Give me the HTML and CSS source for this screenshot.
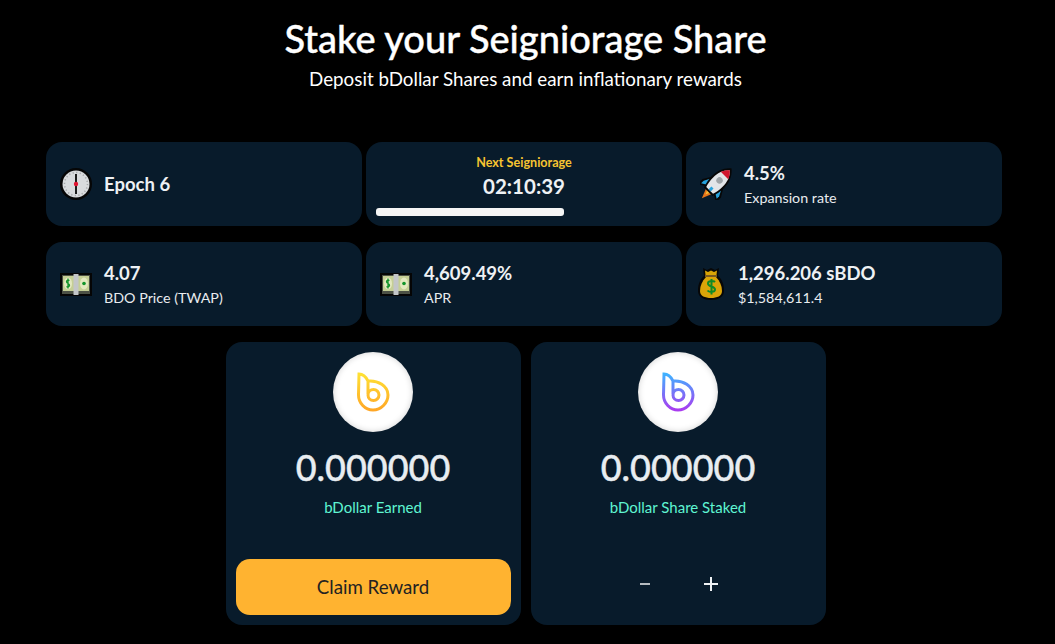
FILE: index.html
```html
<!DOCTYPE html>
<html lang="en">
<head>
    <meta charset="UTF-8">
    <title>Stake</title>
    <link rel="stylesheet" href="styles.css">
</head>
<body>
    <svg class="defs" width="0" height="0">
        <defs>
            <symbol id="ico_clock" viewBox="0 0 32 32">
                <circle cx="16" cy="16" r="16" fill="#060606"/>
                <circle cx="16" cy="16" r="13.500" fill="#d9dbdd"/>
                <circle cx="16" cy="16" r="11.500" fill="none" stroke="#a5a7a9" stroke-width="1.500" stroke-dasharray="1.200 2.400"/>
                <rect x="15" y="6" width="2" height="20" fill="#1d1d1d"/>
                <circle cx="16" cy="16" r="2.200" fill="#e0122f"/>
            </symbol>
            <symbol id="ico_money" viewBox="0 0 32 23">
                <rect width="32" height="23" fill="#050505"/>
                <rect x="2" y="2" width="28" height="19" fill="#4c5145"/>
                <rect x="3" y="3" width="26" height="15" fill="#c5cf95"/>
                <ellipse cx="8" cy="10.500" rx="4" ry="6" fill="#e3e8bf"/>
                <ellipse cx="24" cy="10.500" rx="4" ry="6" fill="#e3e8bf"/>
                <path d="M9.500 7.500 C8 6.500 6.500 7.500 6.500 8.800 C6.500 10.800 9.500 10.200 9.500 12.200 C9.500 13.500 8 14.500 6.500 13.500 M8 5.500 L8 15.500" fill="none" stroke="#12942a" stroke-width="1.300"/>
                <circle cx="24" cy="10.500" r="1.800" fill="#12942a"/>
                <rect x="13.500" y="1" width="5" height="21" fill="#c3c6c8"/>
            </symbol>
            <symbol id="ico_rocket" viewBox="0 0 32 32">
                <g transform="rotate(45 16 16)">
                    <path d="M12 26 L20 26 L16 36 Z" fill="#e8751a"/>
                    <path d="M14 26 L18 26 L16 31 Z" fill="#f5c23a"/>
                    <path d="M9 12 L3 22 L3 29 L10 25 L22 25 L29 29 L29 22 L23 12 Z" fill="#070707"/>
                    <path d="M9 15 L5 22.500 L5 26 L10 23 Z" fill="#27a2dc"/>
                    <path d="M23 15 L27 22.500 L27 26 L22 23 Z" fill="#27a2dc"/>
                    <path d="M16 -6 C22 -1 24.500 6 24.500 13 C24.500 18 23.500 23 22 27 L10 27 C8.500 23 7.500 18 7.500 13 C7.500 6 10 -1 16 -6 Z" fill="#070707"/>
                    <path d="M16 -3.500 C21 1 22.700 7 22.700 13 C22.700 18 22 22 20.800 25 L11.200 25 C10 22 9.300 18 9.300 13 C9.300 7 11 1 16 -3.500 Z" fill="#e2e5e8"/>
                    <path d="M16 -3.500 C18.500 -1.300 20.300 1.300 21.300 4 L10.700 4 C11.700 1.300 13.500 -1.300 16 -3.500 Z" fill="#d1152d"/>
                    <rect x="14.500" y="21" width="3" height="4" fill="#27a2dc"/>
                    <circle cx="16" cy="11" r="3.200" fill="#9ea4a8"/>
                </g>
            </symbol>
            <symbol id="ico_bag" viewBox="0 0 26 32">
                <path d="M5 0 L9 2 L13 0 L17 2 L21 0 L20 8 C25 12 26 18 26 23 C26 29 20 32 13 32 C6 32 0 29 0 23 C0 18 1 12 6 8 Z" fill="#070707"/>
                <path d="M7 2.500 L10 4 L13 2.500 L16 4 L19 2.500 L18.500 7 L7.500 7 Z" fill="#d9a406"/>
                <rect x="7" y="7" width="12" height="2" fill="#7a5a20"/>
                <path d="M8 9 L18 9 C22 13 24 18 24 23 C24 28 19 30 13 30 C7 30 2 28 2 23 C2 18 4 13 8 9 Z" fill="#dba508"/>
                <path d="M17 14 C15.500 12.500 10 12.500 10 15.500 C10 19 17 18 17 21.500 C17 24.500 11 24.500 9.500 22.500 M13.500 11 L13.500 26.500" fill="none" stroke="#0f8a26" stroke-width="2"/>
            </symbol>
            <linearGradient id="grad_gold" x1="0" y1="0" x2="0" y2="1">
                <stop offset="0" stop-color="#ffe135"/>
                <stop offset="1" stop-color="#ffa726"/>
            </linearGradient>
            <linearGradient id="grad_purple" x1="0" y1="0" x2="0" y2="1">
                <stop offset="0" stop-color="#3fb2ff"/>
                <stop offset="1" stop-color="#a93cf0"/>
            </linearGradient>
        </defs>
    </svg>

    <header class="page_head">
        <h1>Stake your Seigniorage Share</h1>
        <p>Deposit bDollar Shares and earn inflationary rewards</p>
    </header>

    <div class="stats">
        <div class="stat">
            <svg class="ico ico_round"><use href="#ico_clock"/></svg>
            <div class="stat_big">Epoch 6</div>
        </div>
        <div class="stat stat_next">
            <div class="next_label">Next Seigniorage</div>
            <div class="next_time">02:10:39</div>
            <div class="next_bar"></div>
        </div>
        <div class="stat">
            <svg class="ico ico_round"><use href="#ico_rocket"/></svg>
            <div class="stat_text">
                <div class="stat_big">4.5%</div>
                <div class="stat_small">Expansion rate</div>
            </div>
        </div>
        <div class="stat">
            <svg class="ico ico_money"><use href="#ico_money"/></svg>
            <div class="stat_text">
                <div class="stat_big">4.07</div>
                <div class="stat_small">BDO Price (TWAP)</div>
            </div>
        </div>
        <div class="stat">
            <svg class="ico ico_money"><use href="#ico_money"/></svg>
            <div class="stat_text">
                <div class="stat_big">4,609.49%</div>
                <div class="stat_small">APR</div>
            </div>
        </div>
        <div class="stat">
            <svg class="ico ico_bag"><use href="#ico_bag"/></svg>
            <div class="stat_text">
                <div class="stat_big">1,296.206 sBDO</div>
                <div class="stat_small">$1,584,611.4</div>
            </div>
        </div>
    </div>

    <div class="cards">
        <div class="card">
            <div class="logo">
                <svg width="34" height="40" viewBox="0 0 34 40"><path d="M3 2 C8 2 10 5 12 9 C22 8 32 14 32 23 C32 31 25 38 17 38 C9 38 2.500 31 2.500 23 Z M12 9 L12 22 M12 23 A5.500 5.500 0 1 0 23 23 A5.500 5.500 0 1 0 12 23" fill="none" stroke="url(#grad_gold)" stroke-width="3"/></svg>
            </div>
            <div class="amount">0.000000</div>
            <div class="amount_label">bDollar Earned</div>
            <button class="btn_claim">Claim Reward</button>
        </div>
        <div class="card">
            <div class="logo">
                <svg width="34" height="40" viewBox="0 0 34 40"><path d="M3 2 C8 2 10 5 12 9 C22 8 32 14 32 23 C32 31 25 38 17 38 C9 38 2.500 31 2.500 23 Z M12 9 L12 22 M12 23 A5.500 5.500 0 1 0 23 23 A5.500 5.500 0 1 0 12 23" fill="none" stroke="url(#grad_purple)" stroke-width="3"/></svg>
            </div>
            <div class="amount">0.000000</div>
            <div class="amount_label">bDollar Share Staked</div>
            <div class="stake_btns">
                <span class="minus"></span>
                <span class="plus"></span>
            </div>
        </div>
    </div>
</body>
</html>
```

FILE: styles.css
```css
* {
    box-sizing: border-box;
}

body {
    margin: 0;
    background-color: #000;
    color: #fff;
    font-family: "Lato", "Open Sans", sans-serif;
}

.defs {
    display: block;
    height: 0;
}

.page_head {
    text-align: center;
    padding: 14px 4px 0 0;
    height: 142px;
}

.page_head h1 {
    margin: 0;
    font-size: 38px;
    line-height: 48px;
    font-weight: 500;
    -webkit-text-stroke: .4px #fff;
}

.page_head p {
    margin: 0;
    padding-top: 4px;
    font-size: 18.800px;
    line-height: 26px;
}

.stats {
    display: grid;
    grid-template-columns: repeat(3, 316px);
    grid-auto-rows: 84px;
    column-gap: 4px;
    row-gap: 16px;
    margin-left: 46px;
}

.stat {
    display: flex;
    align-items: center;
    padding-left: 14px;
    background-color: #081b2b;
    border-radius: 16px;
}

.ico {
    flex: none;
    width: 32px;
    height: 32px;
    margin-right: 12px;
}

.ico_money {
    height: 23px;
}

.ico_bag {
    width: 26px;
    margin-left: -2px;
    margin-right: 14px;
}

.stat_big {
    font-size: 18.500px;
    line-height: 24px;
    font-weight: 700;
    color: #eef1f4;
}

.stat_small {
    font-size: 14.300px;
    line-height: 18px;
    margin-top: 4px;
    color: #e8ecef;
}

.stat_next {
    display: block;
    padding: 13px 10px 0;
    text-align: center;
}

.next_label {
    font-size: 12.600px;
    line-height: 15px;
    font-weight: 700;
    color: #f7c531;
}

.next_time {
    margin-top: 3px;
    font-size: 20.500px;
    line-height: 26px;
    font-weight: 700;
    color: #eef1f4;
}

.next_bar {
    width: 188px;
    height: 8px;
    margin-top: 9px;
    background-color: #f5f5f5;
    border-radius: 3px;
}

.cards {
    display: flex;
    justify-content: center;
    gap: 10px;
    margin-top: 16px;
    padding-right: 4px;
}

.card {
    display: flex;
    flex-direction: column;
    align-items: center;
    width: 295px;
    height: 283px;
    padding: 10px 10px;
    background-color: #081b2b;
    border-radius: 16px;
}

.logo {
    display: flex;
    align-items: center;
    justify-content: center;
    width: 80px;
    height: 80px;
    background-color: #fff;
    border-radius: 50%;
    box-shadow: inset 0 0 6px rgba(0, 0, 0, .18);
}

.amount {
    margin-top: 12px;
    font-size: 36px;
    line-height: 46px;
    font-weight: 500;
    color: #e8edf1;
    -webkit-text-stroke: .4px #e8edf1;
}

.amount_label {
    margin-top: 8px;
    font-size: 15px;
    line-height: 18px;
    color: #5ff5d2;
}

.btn_claim {
    width: 275px;
    height: 56px;
    margin-top: auto;
    padding-bottom: 2px;
    border: none;
    border-radius: 14px;
    background-color: #ffb330;
    color: #222;
    font-family: inherit;
    font-size: 18.700px;
}

.stake_btns {
    display: flex;
    align-items: center;
    gap: 54px;
    margin: 61px 0 0 2px;
}

.minus {
    width: 10px;
    height: 2px;
    background-color: #b5bbc0;
}

.plus {
    width: 14px;
    height: 14px;
    background:
        linear-gradient(#eef1f4, #eef1f4) center / 14px 2px no-repeat,
        linear-gradient(#eef1f4, #eef1f4) center / 2px 14px no-repeat;
}
```
